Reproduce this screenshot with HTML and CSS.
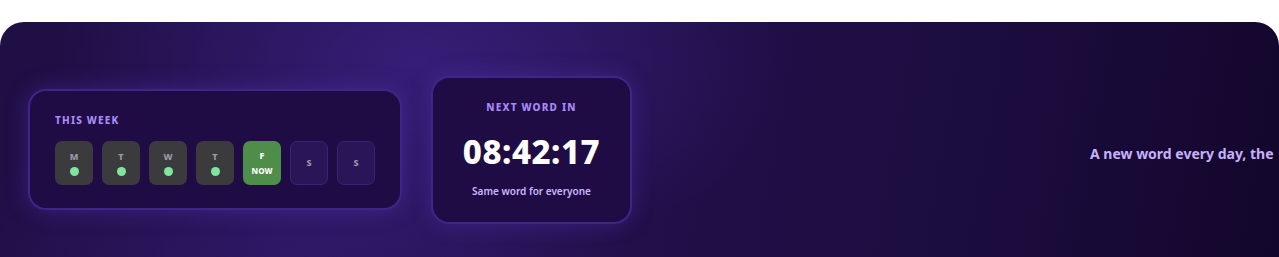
FILE: index.html
```html
<!DOCTYPE html>
<html lang="en">
<head>
  <meta charset="UTF-8">
  <meta name="viewport" content="width=device-width, initial-scale=1.0">
  <title>Daily Word</title>
  <link rel="stylesheet" href="styles.css">
</head>
<body>
  <section class="hero">
    <div class="week-card">
      <div class="label">This week</div>
      <div class="days">
        <div class="day done"><span>M</span><i class="dot"></i></div>
        <div class="day done"><span>T</span><i class="dot"></i></div>
        <div class="day done"><span>W</span><i class="dot"></i></div>
        <div class="day done"><span>T</span><i class="dot"></i></div>
        <div class="day today"><span>F</span><span class="now">NOW</span></div>
        <div class="day future"><span>S</span></div>
        <div class="day future"><span>S</span></div>
      </div>
    </div>

    <div class="timer-card">
      <div class="label">Next word in</div>
      <div class="time">08:42:17</div>
      <div class="sub">Same word for everyone</div>
    </div>

    <p class="tagline">A new word every day, the</p>
  </section>
</body>
</html>
```

FILE: styles.css
```css
body {
  margin: 0;
  padding-top: 22px;
  background: #fff;
  font-family: "Noto Sans", "Open Sans", sans-serif;
  overflow: hidden;
}
.hero {
  height: 256px;
  border-radius: 24px 24px 0 0;
  overflow: hidden;
  display: flex;
  align-items: center;
  padding-left: 28px;
  background:
    radial-gradient(ellipse 520px 300px at 420px 40px, rgba(58, 34, 130, 0.8), rgba(58, 34, 130, 0) 70%),
    radial-gradient(ellipse 500px 260px at 300px 250px, rgba(52, 30, 120, 0.65), rgba(52, 30, 120, 0) 70%),
    linear-gradient(100deg, #1f0f44 0%, #23114d 40%, #1c0d40 75%, #13062b 100%);
  color: #fff;
}
.label {
  font-size: 10px;
  font-weight: 800;
  letter-spacing: 1.2px;
  text-transform: uppercase;
  color: #a78bf5;
}
.week-card {
  flex-shrink: 0;
  box-sizing: border-box;
  width: 374px;
  height: 121px;
  margin-top: -2px;
  padding: 22px 25px 0;
  background: #1f0c45;
  border: 2px solid #3f2585;
  border-radius: 18px;
  box-shadow: 0 0 22px rgba(105, 60, 215, 0.35);
}
.days {
  display: flex;
  gap: 9px;
  margin-top: 14px;
}
.day {
  box-sizing: border-box;
  width: 38px;
  height: 44px;
  border-radius: 7px;
  display: flex;
  flex-direction: column;
  align-items: center;
  justify-content: center;
  gap: 4px;
  font-size: 9px;
  font-weight: 800;
  color: #9d9aa8;
}
.day.done {
  background: #3b3b3d;
}
.day.today {
  background: #4f8e4a;
  color: #fff;
  gap: 3px;
}
.day.today .now {
  font-size: 8px;
}
.day.future {
  background: #2a1558;
  border: 1px solid #3a2277;
}
.dot {
  width: 9px;
  height: 9px;
  border-radius: 50%;
  background: #7fe6a0;
}
.timer-card {
  flex-shrink: 0;
  box-sizing: border-box;
  width: 201px;
  height: 148px;
  margin-left: 29px;
  padding-top: 22px;
  text-align: center;
  background: #1f0c45;
  border: 2px solid #3f2585;
  border-radius: 18px;
  box-shadow: 0 0 22px rgba(105, 60, 215, 0.3);
}
.time {
  margin-top: 18px;
  font-size: 33px;
  font-weight: 800;
  line-height: 40px;
  letter-spacing: 0.5px;
}
.sub {
  margin-top: 12px;
  font-size: 10px;
  font-weight: 600;
  color: #c9b9fb;
}
.tagline {
  flex-shrink: 0;
  margin: 6px 0 0 458px;
  white-space: nowrap;
  font-size: 14px;
  font-weight: 700;
  color: #c6b2f7;
}
```
